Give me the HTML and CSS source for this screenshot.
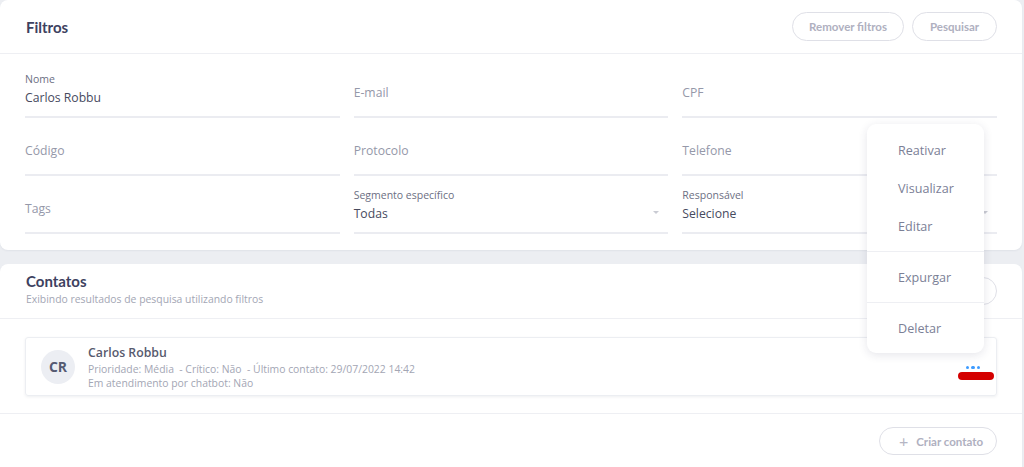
FILE: index.html
```html
<!DOCTYPE html>
<html lang="pt-BR">
<head>
<meta charset="utf-8">
<title>Contatos</title>
<link rel="stylesheet" href="styles.css">
</head>
<body>
<div class="page">
  <section class="card filters">
    <header class="card-head">
      <h2 class="title">Filtros</h2>
      <div class="actions">
        <button class="pill">Remover filtros</button>
        <button class="pill">Pesquisar</button>
      </div>
    </header>
    <div class="fields">
      <div class="field filled"><span class="label">Nome</span><span class="value">Carlos Robbu</span></div>
      <div class="field"><span class="ph">E-mail</span></div>
      <div class="field"><span class="ph">CPF</span></div>
      <div class="field"><span class="ph">Código</span></div>
      <div class="field"><span class="ph">Protocolo</span></div>
      <div class="field"><span class="ph">Telefone</span></div>
      <div class="field"><span class="ph">Tags</span></div>
      <div class="field filled"><span class="label">Segmento específico</span><span class="value select">Todas<i class="caret"></i></span></div>
      <div class="field filled"><span class="label">Responsável</span><span class="value select">Selecione<i class="caret"></i></span></div>
    </div>
  </section>

  <section class="card contacts">
    <header class="card-head tall">
      <div>
        <h2 class="title">Contatos</h2>
        <p class="subtitle">Exibindo resultados de pesquisa utilizando filtros</p>
      </div>
      <button class="pill ghost" aria-label="Opções"></button>
    </header>
    <div class="list">
      <div class="contact">
        <div class="avatar">CR</div>
        <div class="info">
          <div class="name">Carlos Robbu</div>
          <div class="meta">Prioridade: Média &nbsp;- Crítico: Não &nbsp;- Último contato: 29/07/2022 14:42</div>
          <div class="meta">Em atendimento por chatbot: Não</div>
        </div>
        <div class="more"><span></span><span></span><span></span></div>
        <div class="mark"></div>
      </div>
    </div>
    <footer class="card-foot">
      <button class="pill add"><span class="plus">+</span>Criar contato</button>
    </footer>
  </section>

  <div class="menu">
    <div class="group first">
      <div class="item">Reativar</div>
      <div class="item">Visualizar</div>
      <div class="item">Editar</div>
    </div>
    <div class="group">
      <div class="item">Expurgar</div>
    </div>
    <div class="group">
      <div class="item">Deletar</div>
    </div>
  </div>
</div>
</body>
</html>
```

FILE: styles.css
```css
* { box-sizing: border-box; }
html, body { margin: 0; padding: 0; }
body {
  background: #eceef2;
  font-family: "Open Sans", "Noto Sans", sans-serif;
  color: #4a4d60;
  height: 467px;
  overflow: hidden;
}
.page {
  position: relative;
  width: 1022px;
  display: flex;
  flex-direction: column;
  gap: 14px;
}
.card {
  background: #fff;
  border-radius: 8px;
  box-shadow: 0 1px 2px rgba(40, 45, 80, 0.06);
}
.card-head {
  height: 54px;
  padding: 0 25px 0 26px;
  display: flex;
  align-items: center;
  justify-content: space-between;
  border-bottom: 1px solid #eeeff3;
}
.card-head.tall {
  height: 55px;
  padding-top: 7px;
  padding-bottom: 12px;
}
.title {
  margin: 0;
  font-family: "Lato", "Open Sans", sans-serif;
  font-weight: 700;
  font-size: 15px;
  line-height: 20px;
  color: #3d4160;
}
.subtitle {
  margin: 0;
  font-size: 10.4px;
  line-height: 16px;
  color: #a3a6b4;
}
.actions { display: flex; gap: 8px; }
.pill {
  height: 29px;
  padding: 0 17px;
  border: 1.5px solid #dfe0e7;
  border-radius: 15px;
  background: #fff;
  font-family: "Lato", "Open Sans", sans-serif;
  font-weight: 700;
  font-size: 11.5px;
  color: #afb0c0;
  display: inline-flex;
  align-items: center;
}
.filters .pill:first-child { width: 112px; justify-content: center; padding: 0; }
.filters .pill:last-child { width: 85px; justify-content: center; padding: 0; }
.pill.ghost { width: 100px; height: 28px; margin-top: 4px; }

.fields {
  padding: 6px 25px 16px;
  display: grid;
  grid-template-columns: repeat(3, 1fr);
  column-gap: 14px;
}
.field {
  height: 58px;
  display: flex;
  flex-direction: column;
  justify-content: flex-end;
  border-bottom: 2px solid #ebecf1;
  padding-bottom: 9px;
}
.label {
  font-size: 10.5px;
  line-height: 14px;
  color: #6c6f83;
  margin-bottom: 3px;
}
.value {
  font-size: 12.2px;
  line-height: 18px;
  color: #474a5e;
}
.ph {
  font-size: 12.2px;
  line-height: 18px;
  color: #9598a9;
  padding-bottom: 5px;
}
.select {
  display: flex;
  justify-content: space-between;
  align-items: center;
}
.caret {
  width: 0;
  height: 0;
  border-left: 3px solid transparent;
  border-right: 3px solid transparent;
  border-top: 3px solid #c9cbd3;
  margin-right: 9px;
  margin-bottom: 4px;
}

.list { padding: 18px 25px 17px; border-bottom: 1px solid #eeeff3; }
.contact {
  position: relative;
  height: 59px;
  display: flex;
  align-items: center;
  padding: 0 16px 0 15px;
  border: 1px solid #eceef2;
  border-radius: 3px;
  box-shadow: 0 1px 3px rgba(40, 45, 80, 0.08);
}
.avatar {
  width: 34px;
  height: 34px;
  border-radius: 50%;
  background: #eceef3;
  display: flex;
  align-items: center;
  justify-content: center;
  font-weight: 700;
  font-size: 14px;
  color: #555a72;
  flex: none;
}
.info { margin-left: 13px; flex: 1; padding-top: 1px; }
.name {
  font-size: 12.3px;
  line-height: 18px;
  font-weight: 600;
  color: #575a6e;
}
.meta {
  font-size: 10.4px;
  line-height: 14px;
  color: #a3a6b4;
}
.more { display: flex; gap: 2px; align-self: center; margin-top: 2px; }
.more span {
  width: 3.5px;
  height: 3.5px;
  border-radius: 50%;
  background: #3d9bff;
}
.mark {
  position: absolute;
  left: 932px;
  top: 34px;
  width: 36px;
  height: 8px;
  border-radius: 4px;
  background: #d40000;
}
.card-foot {
  padding: 13px 25px 20px;
  display: flex;
  justify-content: flex-end;
}
.pill.add { width: 118px; height: 28px; padding: 0 0 0 19px; }
.plus {
  font-family: "Lato", sans-serif;
  font-weight: 400;
  font-size: 16px;
  color: #b5b6c4;
  margin-right: 8px;
  line-height: 1;
}

.menu {
  position: absolute;
  left: 867px;
  top: 124px;
  width: 117px;
  background: #fff;
  border-radius: 9px;
  box-shadow: 0 2px 10px rgba(40, 45, 80, 0.12);
}
.group { padding: 6px 0; border-top: 1px solid #eeeff3; }
.group.first { border-top: none; padding-top: 7px; }
.item {
  height: 38px;
  display: flex;
  align-items: center;
  padding-left: 31px;
  font-size: 12.6px;
  color: #7b8096;
}
```
